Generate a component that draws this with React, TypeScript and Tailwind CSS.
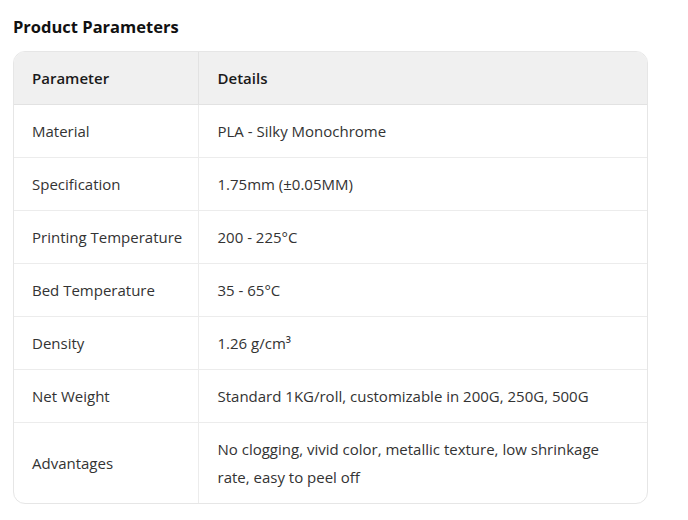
const rows: [string, string][] = [
  ["Material", "PLA - Silky Monochrome"],
  ["Specification", "1.75mm (±0.05MM)"],
  ["Printing Temperature", "200 - 225°C"],
  ["Bed Temperature", "35 - 65°C"],
  ["Density", "1.26 g/cm³"],
  ["Net Weight", "Standard 1KG/roll, customizable in 200G, 250G, 500G"],
  ["Advantages", "No clogging, vivid color, metallic texture, low shrinkage rate, easy to peel off"],
];

export default function App() {
  return (
    <div
      className="min-h-[520px] w-[688px] bg-white px-[13px] pt-[15px] text-[#333333]"
      style={{ fontFamily: '"Open Sans", "Noto Sans", sans-serif' }}
    >
      <h2 className="text-[16.5px] font-bold leading-[24px] text-[#111111]">Product Parameters</h2>
      <div className="mt-[12px] w-[635px] overflow-hidden rounded-[12px] border border-[#e6e6e6]">
        <table className="w-full table-fixed border-collapse text-[15px] leading-[28px]">
          <colgroup>
            <col className="w-[184px]" />
            <col />
          </colgroup>
          <thead>
            <tr className="bg-[#f0f0f0]">
              <th className="whitespace-nowrap border-r border-b border-[#e2e2e2] pl-[18px] pr-[4px] py-[12px] text-left font-semibold text-[#1a1a1a]">
                Parameter
              </th>
              <th className="border-b border-[#e2e2e2] pl-[19px] pr-[18px] py-[12px] text-left font-semibold text-[#1a1a1a]">
                Details
              </th>
            </tr>
          </thead>
          <tbody>
            {rows.map(([k, v], i) => (
              <tr key={k} className={i < rows.length - 1 ? "border-b border-[#ececec]" : ""}>
                <td className="whitespace-nowrap border-r border-[#ececec] pl-[18px] pr-[4px] py-[12px] align-middle">
                  {k}
                </td>
                <td className="pl-[19px] pr-[30px] py-[12px] align-middle">{v}</td>
              </tr>
            ))}
          </tbody>
        </table>
      </div>
    </div>
  );
}
